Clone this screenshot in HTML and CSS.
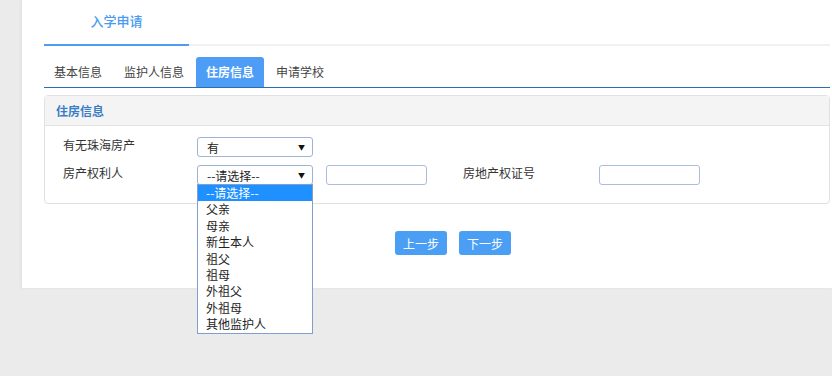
FILE: index.html
```html
<!doctype html>
<html lang="zh-CN">

<head>
  <meta charset="UTF-8" />
  <title>入学申请</title>
  <link rel="stylesheet" href="styles.css">
</head>

<body>
  <div class="page">
    <div class="header">
      <div class="header-tab">入学申请</div>
    </div>

    <ul class="tabs">
      <li class="tab">基本信息</li>
      <li class="tab">监护人信息</li>
      <li class="tab active">住房信息</li>
      <li class="tab">申请学校</li>
    </ul>

    <div class="panel">
      <div class="panel-heading">住房信息</div>
      <div class="panel-body">
        <div class="form-row">
          <label class="label">有无珠海房产</label>
          <div class="select">
            <span>有</span>
            <span class="arrow">▼</span>
          </div>
        </div>
        <div class="form-row">
          <label class="label">房产权利人</label>
          <div class="select select-open">
            <span>--请选择--</span>
            <span class="arrow">▼</span>
            <ul class="options">
              <li class="option selected">--请选择--</li>
              <li class="option">父亲</li>
              <li class="option">母亲</li>
              <li class="option">新生本人</li>
              <li class="option">祖父</li>
              <li class="option">祖母</li>
              <li class="option">外祖父</li>
              <li class="option">外祖母</li>
              <li class="option">其他监护人</li>
            </ul>
          </div>
          <input class="text-input owner-name" type="text" />
          <label class="label label-right">房地产权证号</label>
          <input class="text-input" type="text" />
        </div>
      </div>
    </div>

    <div class="actions">
      <button type="button" class="btn">上一步</button>
      <button type="button" class="btn">下一步</button>
    </div>
  </div>
</body>

</html>
```

FILE: styles.css
```css
html,
body {
  min-height: 100vh;
}

body {
  margin: 0;
  background: #ebebeb;
  font-family: "Noto Sans CJK SC", "Microsoft YaHei", sans-serif;
  font-size: 12px;
  color: #333;
}

.page {
  margin-left: 22px;
  padding: 0 2px 33px 22px;
  background: #fff;
  box-shadow: -1px 0 3px rgba(0, 0, 0, 0.06);
}

/* header */
.header {
  display: flex;
  height: 44px;
  border-bottom: 2px solid #f1f1f1;
}

.header-tab {
  width: 145px;
  line-height: 42px;
  text-align: center;
  font-size: 13px;
  font-weight: 500;
  color: #4a9af2;
  border-bottom: 2px solid #4f9df0;
  margin-bottom: -2px;
}

/* tabs */
.tabs {
  display: flex;
  gap: 2px;
  list-style: none;
  margin: 11px 0 0;
  padding: 0;
  border-bottom: 1px solid #2d6fae;
}

.tab {
  padding: 0 10px;
  line-height: 30px;
  color: #444;
  border-radius: 3px 3px 0 0;
}

.tab.active {
  background: #4d9df6;
  color: #fff;
  font-weight: bold;
}

/* panel */
.panel {
  margin-top: 7px;
  border: 1px solid #e1e1e1;
  border-radius: 4px;
}

.panel-heading {
  height: 29px;
  line-height: 29px;
  padding-left: 11px;
  background: #f4f4f4;
  border-bottom: 1px solid #e3e3e3;
  color: #3a7dc6;
  font-weight: bold;
}

.panel-body {
  padding: 11px 0 18px 18px;
  display: flex;
  flex-direction: column;
  gap: 8px;
}

.form-row {
  display: flex;
  align-items: flex-start;
}

.label {
  width: 134px;
  line-height: 16px;
  color: #333;
}

.label-right {
  width: 136px;
  line-height: 16px;
  margin-left: 36px;
}

.select {
  position: relative;
  box-sizing: border-box;
  width: 116px;
  height: 20px;
  padding: 0 0 0 9px;
  display: flex;
  align-items: center;
  justify-content: space-between;
  border: 1px solid #9db4d8;
  border-radius: 3px;
  color: #222;
}

.arrow {
  font-size: 7px;
  width: 14px;
  color: #111;
}

.text-input {
  box-sizing: border-box;
  width: 101px;
  height: 20px;
  margin: 0;
  border: 1px solid #a9bddc;
  border-radius: 3px;
  background: #fff;
}

.owner-name {
  margin-left: 13px;
}

/* open dropdown list */
.options {
  position: absolute;
  top: 18px;
  left: -1px;
  box-sizing: border-box;
  width: 116px;
  height: 150px;
  margin: 0;
  padding: 0;
  list-style: none;
  background: #fff;
  border: 1px solid #7f9fce;
  z-index: 2;
}

.option {
  height: 16.4px;
  line-height: 16px;
  padding-left: 8px;
  color: #222;
}

.option.selected {
  background: #1e90ff;
  color: #fff;
}

/* buttons */
.actions {
  display: flex;
  gap: 12px;
  margin-top: 27px;
  padding-left: 351px;
}

.btn {
  width: 52px;
  height: 24px;
  padding: 0;
  border: none;
  border-radius: 3px;
  background: #4a9ff5;
  color: #fff;
  font-family: inherit;
  font-size: 12px;
  cursor: pointer;
}
```
